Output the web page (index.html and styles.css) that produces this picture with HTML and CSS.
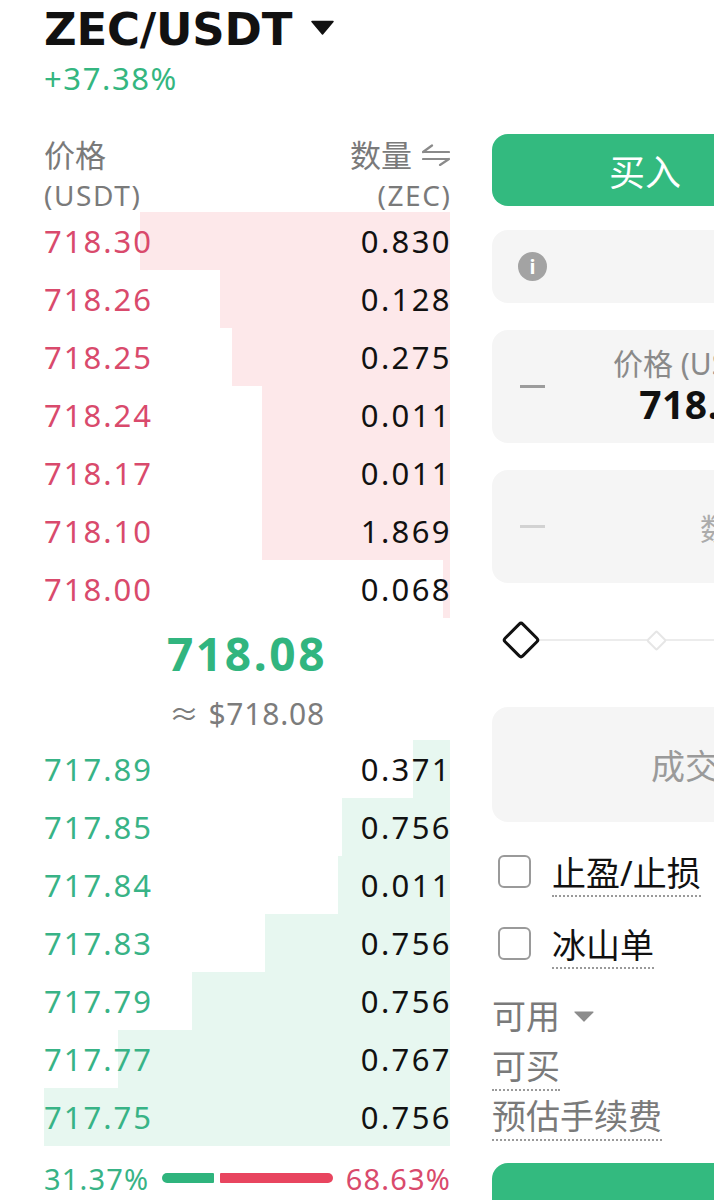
FILE: index.html
```html
<!DOCTYPE html>
<html lang="zh">
<head>
<meta charset="utf-8">
<title>ZEC/USDT</title>
<link rel="stylesheet" href="styles.css">
</head>
<body>
<div class="page">
  <header class="top">
    <h1 class="pair">ZEC/USDT <svg class="caret" width="23" height="15" viewBox="0 0 23 15"><path d="M1 1.5 L22 1.5 L11.5 14 Z" fill="#111" stroke="#111" stroke-width="1.5" stroke-linejoin="round"/></svg></h1>
    <div class="change">+37.38%</div>
  </header>

  <main class="main">
    <section class="book">
      <div class="book-head">
        <div class="col-l">
          <div class="h1">价格</div>
          <div class="h2">(USDT)</div>
        </div>
        <div class="col-r">
          <div class="h1">数量 <svg class="swap" width="28" height="22" viewBox="0 0 28 22"><path d="M1 8 H27 M1 8 L10 1.5 M1 15 H27 M27 15 L18 21" fill="none" stroke="#8a8a8a" stroke-width="2.2" stroke-linecap="round"/></svg></div>
          <div class="h2">(ZEC)</div>
        </div>
      </div>

      <div class="asks">
        <div class="row ask" style="--w:310px"><span class="p">718.30</span><span class="q">0.830</span></div>
        <div class="row ask" style="--w:230px"><span class="p">718.26</span><span class="q">0.128</span></div>
        <div class="row ask" style="--w:218px"><span class="p">718.25</span><span class="q">0.275</span></div>
        <div class="row ask" style="--w:188px"><span class="p">718.24</span><span class="q">0.011</span></div>
        <div class="row ask" style="--w:188px"><span class="p">718.17</span><span class="q">0.011</span></div>
        <div class="row ask" style="--w:188px"><span class="p">718.10</span><span class="q">1.869</span></div>
        <div class="row ask" style="--w:7px"><span class="p">718.00</span><span class="q">0.068</span></div>
      </div>

      <div class="mid">
        <div class="last">718.08</div>
        <div class="usd">≈ $718.08</div>
      </div>

      <div class="bids">
        <div class="row bid" style="--w:37px"><span class="p">717.89</span><span class="q">0.371</span></div>
        <div class="row bid" style="--w:108px"><span class="p">717.85</span><span class="q">0.756</span></div>
        <div class="row bid" style="--w:112px"><span class="p">717.84</span><span class="q">0.011</span></div>
        <div class="row bid" style="--w:185px"><span class="p">717.83</span><span class="q">0.756</span></div>
        <div class="row bid" style="--w:258px"><span class="p">717.79</span><span class="q">0.756</span></div>
        <div class="row bid" style="--w:332px"><span class="p">717.77</span><span class="q">0.767</span></div>
        <div class="row bid" style="--w:406px"><span class="p">717.75</span><span class="q">0.756</span></div>
      </div>

      <div class="ratio">
        <span class="r-buy">31.37%</span>
        <div class="r-bars">
          <span class="bar-g" style="flex-grow:31.37"></span>
          <span class="bar-r" style="flex-grow:68.63"></span>
        </div>
        <span class="r-sell">68.63%</span>
      </div>
    </section>

    <section class="trade">
      <div class="tabs">
        <button class="tab-buy">买入</button>
        <button class="tab-sell">卖出</button>
      </div>

      <div class="box box-type">
        <span class="info">i</span>
      </div>

      <div class="box box-price">
        <span class="minus"></span>
        <div class="field">
          <div class="field-label">价格 (USDT)</div>
          <div class="field-value">718.08</div>
        </div>
        <span class="plus"></span>
      </div>

      <div class="box box-amount">
        <span class="minus light"></span>
        <div class="amount-label">数量 (ZEC)</div>
      </div>

      <div class="slider">
        <span class="knob"></span>
        <span class="tick"></span>
        <span class="tick"></span>
        <span class="tick"></span>
        <span class="tick"></span>
      </div>

      <div class="box box-total">
        <span class="total-label">成交额</span>
      </div>

      <label class="check">
        <span class="cb"></span>
        <span class="dotted">止盈/止损</span>
      </label>
      <label class="check">
        <span class="cb"></span>
        <span class="dotted">冰山单</span>
      </label>

      <div class="avail">可用 <svg class="mini-caret" width="20" height="11" viewBox="0 0 20 11"><path d="M1 1 H19 L10 10 Z" fill="#8c8c8c" stroke="#8c8c8c" stroke-width="1.2" stroke-linejoin="round"/></svg></div>
      <div class="info-line"><span class="dotted grey">可买</span></div>
      <div class="info-line"><span class="dotted grey">预估手续费</span></div>

      <button class="submit">买入 ZEC</button>
    </section>
  </main>
</div>
</body>
</html>
```

FILE: styles.css
```css
* { box-sizing: border-box; }

html, body {
  margin: 0;
  padding: 0;
  width: 714px;
  height: 1200px;
  overflow: hidden;
  background: #fff;
}

body {
  font-family: "Noto Sans", "Noto Sans CJK SC", sans-serif;
  color: #111;
}

.page {
  padding-left: 44px;
  display: flex;
  flex-direction: column;
}

.top {
  display: flex;
  flex-direction: column;
  height: 134px;
}

.pair {
  margin: 0;
  font-family: "DejaVu Sans", "Noto Sans", sans-serif;
  font-size: 45px;
  font-weight: 700;
  line-height: 59px;
  letter-spacing: -0.2px;
  display: flex;
  align-items: center;
  gap: 19px;
  white-space: nowrap;
}

.caret { margin-top: -4px; }

.change {
  font-size: 31px;
  line-height: 39px;
  color: #34b680;
  letter-spacing: 1.6px;
}

.main {
  display: flex;
  gap: 42px;
  align-items: flex-start;
}

/* ---------- order book ---------- */
.book {
  width: 406px;
  flex-shrink: 0;
  display: flex;
  flex-direction: column;
}

.book-head {
  display: flex;
  justify-content: space-between;
  height: 78px;
  color: #7a7a7a;
}

.book-head .h1 {
  font-size: 31px;
  line-height: 42px;
  display: flex;
  align-items: center;
  gap: 10px;
}

.book-head .h2 {
  font-size: 28px;
  line-height: 38px;
  letter-spacing: 1.6px;
}

.col-r { display: flex; flex-direction: column; align-items: flex-end; }
.col-r .h2 { margin-right: -1.6px; }

.row {
  height: 58px;
  display: flex;
  justify-content: space-between;
  align-items: center;
  font-size: 31px;
  letter-spacing: 2px;
  background: linear-gradient(to left, var(--c) var(--w), transparent var(--w));
}

.row .q { margin-right: -2px; letter-spacing: 2.4px; }

.ask { --c: #fde8ea; }
.bid { --c: #e7f7f0; }

.ask .p { color: #d94a6c; }
.bid .p { color: #38b386; }
.q { color: #111; }

.mid {
  height: 122px;
  display: flex;
  flex-direction: column;
  align-items: center;
}

.last {
  font-size: 46px;
  font-weight: 700;
  line-height: 70px;
  color: #31b57f;
  letter-spacing: 2.6px;
}

.usd {
  font-size: 30px;
  line-height: 52px;
  color: #7c7c7c;
  letter-spacing: 0.8px;
}

.ratio {
  height: 64px;
  display: flex;
  align-items: center;
  gap: 13px;
  font-size: 29px;
  letter-spacing: 1.2px;
}

.r-buy { color: #38b386; }
.r-sell { color: #d94a6c; margin-right: -1.2px; }

.r-bars {
  flex: 1;
  display: flex;
  gap: 6px;
  height: 10px;
}

.bar-g { background: #2fb47d; border-radius: 5px 1px 1px 5px; flex-basis: 0; }
.bar-r { background: #e8455f; border-radius: 1px 5px 5px 1px; flex-basis: 0; }

/* ---------- trade panel ---------- */
.trade {
  width: 420px;
  flex-shrink: 0;
  display: flex;
  flex-direction: column;
}

.tabs {
  display: flex;
  height: 72px;
}

.tab-buy, .tab-sell, .submit {
  border: 0;
  font-family: inherit;
  font-size: 36px;
  color: #fff;
}

.tab-buy {
  width: 306px;
  background: #33ba7f;
  border-radius: 16px;
}

.tab-sell {
  flex: 1;
  background: transparent;
  color: #888;
}

.box {
  background: #f5f5f5;
  border-radius: 16px;
  display: flex;
  align-items: center;
}

.box-type {
  margin-top: 24px;
  height: 73px;
  padding-left: 26px;
}

.info {
  width: 29px;
  height: 29px;
  border-radius: 50%;
  background: #a3a3a3;
  color: #fff;
  font-size: 20px;
  font-weight: 700;
  line-height: 29px;
  text-align: center;
}

.box-price, .box-amount {
  margin-top: 27px;
  height: 113px;
  padding: 0 28px;
}

.minus {
  width: 25px;
  height: 2.5px;
  background: #9c9c9c;
  flex-shrink: 0;
}
.minus.light { background: #d2d2d2; }

.plus { width: 25px; flex-shrink: 0; }

.field {
  flex: 1;
  display: flex;
  flex-direction: column;
  align-items: center;
}

.field-label {
  font-size: 30px;
  line-height: 34px;
  color: #8a8a8a;
  margin-left: -16px;
}

.field-value {
  font-size: 39px;
  line-height: 46px;
  font-weight: 700;
  color: #111;
  letter-spacing: 0.5px;
}

.amount-label {
  margin-left: 155px;
  font-size: 30px;
  color: #ababab;
}

.slider {
  height: 114px;
  margin-bottom: 10px;
  display: flex;
  align-items: center;
  gap: 114px;
  padding-left: 15px;
  background: linear-gradient(#ececec, #ececec) 30px 50% / 100% 2px no-repeat;
}

.knob {
  width: 28px;
  height: 28px;
  border: 3px solid #111;
  border-radius: 4px;
  background: #fff;
  transform: rotate(45deg);
  flex-shrink: 0;
}

.tick {
  width: 15px;
  height: 15px;
  border: 2px solid #e6e6e6;
  border-radius: 2px;
  background: #fff;
  transform: rotate(45deg);
  flex-shrink: 0;
}

.box-total {
  height: 115px;
  justify-content: center;
}

.total-label {
  font-size: 34px;
  color: #9a9a9a;
}

.check {
  height: 72px;
  display: flex;
  align-items: center;
  gap: 21px;
  padding-left: 6px;
}

.check:first-of-type { margin-top: 13px; }

.cb {
  width: 33px;
  height: 33px;
  border: 2.5px solid #9a9a9a;
  border-radius: 6px;
  flex-shrink: 0;
}

.dotted {
  font-size: 34px;
  line-height: 34px;
  padding-bottom: 5px;
  margin-top: 10px;
  border-bottom: 2px dotted #9a9a9a;
  color: #111;
}

.dotted.grey {
  color: #7a7a7a;
  padding-bottom: 1px;
  margin-top: 0;
  line-height: 44px;
}

.avail {
  margin-top: 15px;
  font-size: 34px;
  line-height: 44px;
  color: #7a7a7a;
  display: flex;
  align-items: center;
  gap: 14px;
}

.info-line {
  display: flex;
  margin-top: 6px;
}

.info-line + .info-line { margin-top: 3px; }

.submit {
  margin-top: 22px;
  width: 420px;
  height: 120px;
  padding-top: 40px;
  background: #33ba7f;
  border-radius: 16px;
}
```
